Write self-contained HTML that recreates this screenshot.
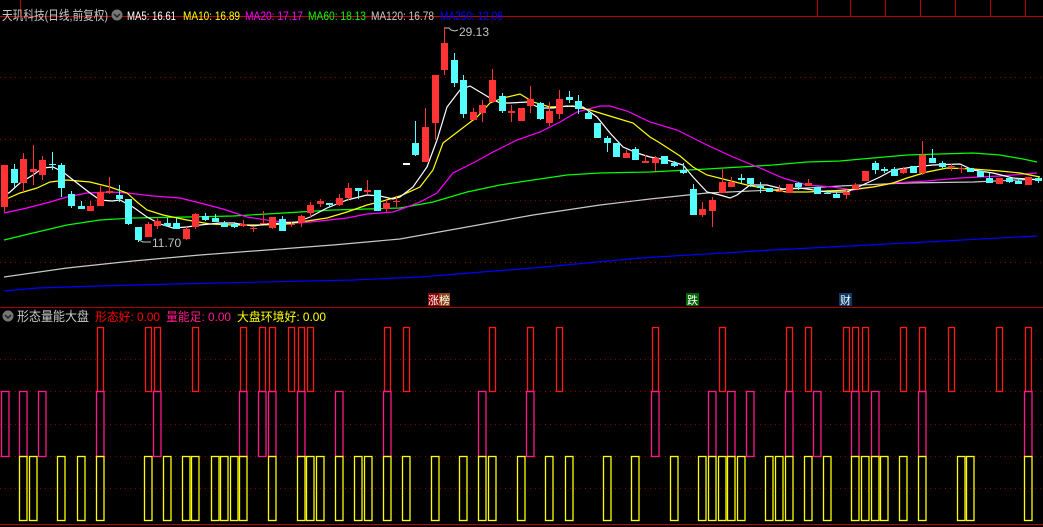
<!DOCTYPE html>
<html><head><meta charset="utf-8"><style>
html,body{margin:0;padding:0;background:#000;width:1043px;height:527px;overflow:hidden}
svg{display:block}
text{font-family:"Liberation Sans","Noto Sans CJK SC",sans-serif}
</style></head><body>
<svg id="s" width="1043" height="527" xmlns="http://www.w3.org/2000/svg">
<rect width="1043" height="527" fill="#000"/>
<line x1="0" y1="16.5" x2="1043" y2="16.5" stroke="#c00000"/>
<g stroke="#c00000"><line x1="20.5" y1="0" x2="20.5" y2="16"/><line x1="817.5" y1="0" x2="817.5" y2="16"/><line x1="850.5" y1="0" x2="850.5" y2="16"/><line x1="885.5" y1="0" x2="885.5" y2="16"/><line x1="920.5" y1="0" x2="920.5" y2="16"/><line x1="955.5" y1="0" x2="955.5" y2="16"/><line x1="990.5" y1="0" x2="990.5" y2="16"/><line x1="1025.5" y1="0" x2="1025.5" y2="16"/></g>
<g stroke="#8a0000" stroke-dasharray="1,4">
<line x1="0" y1="77.5" x2="1043" y2="77.5"/><line x1="0" y1="139.5" x2="1043" y2="139.5"/><line x1="0" y1="200.5" x2="1043" y2="200.5"/><line x1="0" y1="262.5" x2="1043" y2="262.5"/>
<line x1="0" y1="359.5" x2="1043" y2="359.5"/><line x1="0" y1="391.5" x2="1043" y2="391.5"/><line x1="0" y1="424.5" x2="1043" y2="424.5"/><line x1="0" y1="456.5" x2="1043" y2="456.5"/><line x1="0" y1="488.5" x2="1043" y2="488.5"/>
</g>
<line x1="0" y1="307.5" x2="1043" y2="307.5" stroke="#b00000"/>
<line x1="0" y1="524.5" x2="1043" y2="524.5" stroke="#c00000"/>
<g id="ma" fill="none" stroke-width="1.2"></g>
<g id="cd"></g>
<g id="low" fill="none" stroke-width="1.3"></g>
<text x="2" y="20" font-size="13" fill="#c8c8c8" textLength="106" lengthAdjust="spacingAndGlyphs">天玑科技(日线,前复权)</text>
<circle cx="117" cy="15" r="5.5" fill="#777"/><path d="M114 14l3 3 3-3" stroke="#222" stroke-width="1.5" fill="none"/>
<g font-size="12">
<text x="127" y="20" fill="#fff" textLength="49" lengthAdjust="spacingAndGlyphs">MA5: 16.61</text>
<text x="183" y="20" fill="#ffff00" textLength="57" lengthAdjust="spacingAndGlyphs">MA10: 16.89</text>
<text x="245" y="20" fill="#ff00ff" textLength="58" lengthAdjust="spacingAndGlyphs">MA20: 17.17</text>
<text x="308" y="20" fill="#00ff00" textLength="58" lengthAdjust="spacingAndGlyphs">MA60: 18.13</text>
<text x="371" y="20" fill="#c8c8c8" textLength="63" lengthAdjust="spacingAndGlyphs">MA120: 16.78</text>
<text x="440" y="20" fill="#0000ff" textLength="63" lengthAdjust="spacingAndGlyphs">MA250: 12.06</text>
</g>
<text x="459" y="36" font-size="12" fill="#c0c0c0">29.13</text>
<path d="M445 28h4l2 2 4 1 3-1" stroke="#c0c0c0" fill="none"/>
<text x="152" y="247" font-size="12" fill="#c0c0c0">11.70</text>
<path d="M139 240l4 2h8" stroke="#c0c0c0" fill="none"/>
<rect x="428" y="293" width="11" height="13" fill="#8b0000"/><rect x="439" y="293" width="11" height="13" fill="#8b4513"/>
<text x="428" y="304" font-size="11" fill="#fff">涨榜</text>
<rect x="686" y="293" width="13" height="13" fill="#006400"/><text x="687" y="304" font-size="11" fill="#fff">跌</text>
<rect x="839" y="293" width="13" height="13" fill="#0b3a66"/><text x="840" y="304" font-size="11" fill="#fff">财</text>
<circle cx="8" cy="316" r="5.5" fill="#777"/><path d="M5 315l3 3 3-3" stroke="#222" stroke-width="1.5" fill="none"/>
<text x="17" y="321" font-size="13" fill="#c8c8c8" textLength="72" lengthAdjust="spacingAndGlyphs">形态量能大盘</text>
<text x="95" y="321" font-size="12" fill="#ff0000" textLength="65" lengthAdjust="spacingAndGlyphs">形态好: 0.00</text>
<text x="166" y="321" font-size="12" fill="#ff1a8c" textLength="65" lengthAdjust="spacingAndGlyphs">量能足: 0.00</text>
<text x="237" y="321" font-size="12" fill="#ffff00" textLength="89" lengthAdjust="spacingAndGlyphs">大盘环境好: 0.00</text>
</svg>
<script>
var NS="http://www.w3.org/2000/svg";
function el(p,t,a){var e=document.createElementNS(NS,t);for(var k in a)e.setAttribute(k,a[k]);p.appendChild(e);return e;}
var ma=document.getElementById('ma');
var lines=[
["#c8c8c8","4,277 67,268 133,261 200,255 267,250 333,245 400,239 467,227 533,215 600,205 650,199 707,193 773,190 840,186 907,183 973,182 1040,179"],
["#0000ff","4,291 37,288 100,286 173,284 353,280 420,277 533,268 640,258 773,250 907,243 1037,236"],
["#00ff00","4,240 33,233 67,225 100,220 133,218 187,217 233,216 267,214 300,212 333,210 367,209 400,208 433,202 467,192 500,185 533,180 567,175 600,173 650,172 707,169 773,165 807,162 840,161 873,158 907,155 940,154 973,153 1000,155 1023,159 1037,162"],
["#ff00ff","4,213 27,208 50,202 67,197 87,193 110,192 127,193 153,196 180,198 200,203 223,209 247,217 273,221 300,223 320,221 347,218 367,214 393,212 407,207 420,202 437,193 453,173 473,163 493,152 517,140 540,132 560,122 577,112 600,106 610,106 627,111 650,122 677,130 707,145 733,157 760,168 783,178 807,185 833,187 853,190 873,187 893,183 927,181 960,178 1000,176 1037,173"],
["#ffff00","4,200 20,193 37,188 50,182 67,180 90,182 110,187 127,193 137,202 147,210 163,215 187,220 210,224 233,225 260,225 287,224 307,221 327,218 347,212 367,205 383,201 400,196 420,187 433,170 443,143 460,130 477,117 490,103 503,98 520,94 533,102 550,107 573,106 590,110 613,117 633,123 650,137 660,143 680,156 693,167 707,175 727,180 747,185 767,189 787,192 807,192 827,191 847,190 873,187 893,183 907,178 927,172 947,168 973,169 1000,171 1020,173 1040,177"],
["#ffffff","4,196 10,192 20,183 33,175 43,168 53,167 63,172 77,183 90,193 100,200 112,201 120,200 133,207 147,217 160,224 173,228 187,227 200,225 220,223 233,223 253,226 267,224 283,223 297,222 310,217 327,208 347,200 367,195 380,196 393,199 400,197 413,187 427,167 437,140 447,107 460,90 470,86 480,92 490,98 500,103 510,103 527,102 540,108 553,108 567,106 583,107 597,117 610,133 623,147 637,153 650,157 667,160 683,165 693,177 707,192 720,195 730,198 737,195 750,185 767,185 783,189 800,188 827,192 847,192 867,183 880,177 893,170 913,167 933,165 960,164 973,170 993,173 1013,178 1040,180"]];
lines.forEach(function(l){el(ma,'polyline',{points:l[1],stroke:l[0]});});
var C=[[1,165,207,165,212,'r'],[11,169,183,164,187,'c'],[20,159,183,153,192,'r'],[30,169,172,145,185,'r'],[39,160,175,156,180,'r'],[49,164,165,152,170,'c'],[58,165,188,163,197,'c'],[68,194,206,191,208,'c'],[78,206,209,201,209,'c'],[87,206,211,201,211,'r'],[97,192,206,186,206,'r'],[106,191,193,177,194,'r'],[116,195,199,185,202,'c'],[125,199,224,199,225,'c'],[135,227,240,227,242,'c'],[145,224,237,222,237,'r'],[154,221,226,218,229,'r'],[164,223,226,218,227,'c'],[173,223,229,218,229,'c'],[183,229,239,227,240,'r'],[192,214,227,213,229,'r'],[202,216,220,213,221,'c'],[212,218,222,214,222,'c'],[221,223,227,221,227,'c'],[231,224,227,222,228,'c'],[240,224,226,220,227,'r'],[250,228,229,226,232,'r'],[260,223,224,211,224,'r'],[269,217,228,217,229,'r'],[279,219,231,216,231,'c'],[288,224,225,222,227,'r'],[298,216,223,215,227,'r'],[307,205,213,202,217,'r'],[317,201,204,199,207,'r'],[326,203,205,203,207,'c'],[336,198,205,194,206,'r'],[345,188,198,183,200,'r'],[355,188,191,188,199,'c'],[364,190,192,180,194,'r'],[374,190,211,190,211,'c'],[383,203,209,200,212,'r'],[393,201,202,197,207,'r'],[403,163,165,163,165,'w'],[412,143,155,121,156,'c'],[422,127,162,108,162,'r'],[432,75,123,75,140,'r'],[441,43,70,27,75,'r'],[451,60,83,53,87,'c'],[460,80,114,75,118,'c'],[470,112,120,108,121,'r'],[479,105,113,100,122,'r'],[489,80,102,69,102,'r'],[499,96,111,93,113,'c'],[508,111,113,105,122,'r'],[518,108,121,108,121,'r'],[527,99,106,86,113,'r'],[537,103,119,102,120,'c'],[546,111,123,102,126,'r'],[556,99,114,90,119,'r'],[566,97,100,91,103,'c'],[575,101,109,95,114,'c'],[585,113,119,110,119,'c'],[594,123,138,123,138,'c'],[604,138,143,136,152,'c'],[613,143,157,143,157,'c'],[623,153,158,150,158,'r'],[632,149,160,147,160,'c'],[642,161,163,155,163,'r'],[652,158,163,156,171,'r'],[661,156,164,156,164,'c'],[671,163,166,161,167,'c'],[680,170,173,163,174,'c'],[690,189,215,184,215,'c'],[699,209,215,202,217,'r'],[709,200,211,197,227,'r'],[719,182,193,169,193,'r'],[728,182,187,177,187,'r'],[738,178,180,174,183,'c'],[747,178,184,178,187,'c'],[757,186,188,182,193,'c'],[766,188,192,188,192,'c'],[776,191,192,185,192,'r'],[786,184,193,184,193,'r'],[795,183,187,182,190,'c'],[805,183,186,179,186,'r'],[814,187,194,187,194,'c'],[824,193,194,190,194,'c'],[833,194,198,191,198,'c'],[843,192,195,190,199,'r'],[852,185,189,183,189,'r'],[862,171,181,171,181,'r'],[872,163,170,161,174,'c'],[881,169,171,167,173,'c'],[891,169,176,167,176,'c'],[900,169,173,167,174,'r'],[910,166,173,166,173,'c'],[919,155,173,141,175,'r'],[929,158,163,149,163,'c'],[939,163,167,161,168,'c'],[948,166,167,164,171,'r'],[958,168,169,166,173,'r'],[967,168,172,168,172,'c'],[977,171,177,171,177,'c'],[986,178,183,173,183,'c'],[996,178,184,178,184,'r'],[1006,178,182,177,183,'c'],[1015,181,184,178,184,'c'],[1025,177,185,177,185,'r'],[1035,178,181,177,183,'c']];
var cd=document.getElementById('cd');
C.forEach(function(c){var col=c[5]=='r'?'#ff3333':(c[5]=='c'?'#54ffff':'#ffffff');
el(cd,'line',{x1:c[0]+3.5,x2:c[0]+3.5,y1:c[3],y2:c[4],stroke:col});
el(cd,'rect',{x:c[0],y:c[1],width:7,height:Math.max(1,c[2]-c[1]),fill:col});});
var low=document.getElementById('low');
var R=[97,145,154,192,240,259,269,288,298,307,384,403,489,527,556,652,719,786,805,843,852,862,900,919,948,996,1025];
var P=[1,19,38,96,153,239,258,268,297,335,383,478,526,651,708,727,746,785,813,851,871,918,1024];
var Y=[19,29,57,77,96,144,163,182,191,211,220,230,239,268,297,306,316,335,354,364,383,402,431,459,478,488,517,545,565,603,631,670,698,708,718,727,737,765,775,785,804,823,851,861,871,880,899,918,957,966,1024];
R.forEach(function(x){el(low,'rect',{x:x+0.5,y:327.5,width:6,height:64,stroke:'#ff1a1a'});});
P.forEach(function(x){el(low,'rect',{x:x+0.5,y:391.5,width:7.5,height:65,stroke:'#ff1a8c'});});
Y.forEach(function(x){el(low,'rect',{x:x+0.5,y:456.5,width:7.5,height:64,stroke:'#ffff00'});});
</script>
</body></html>
